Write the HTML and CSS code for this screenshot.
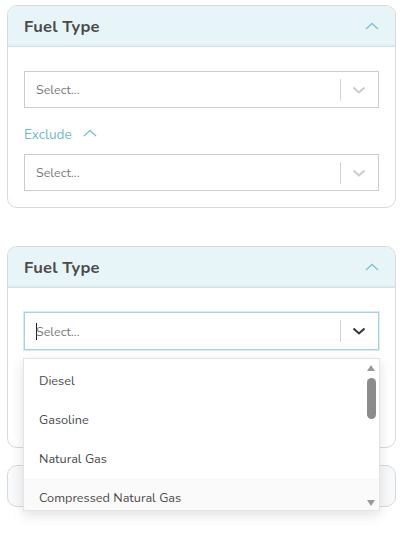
FILE: index.html
```html
<!DOCTYPE html>
<html>
<head>
<meta charset="utf-8">
<link rel="stylesheet" href="styles.css">
</head>
<body>
<div class="page">
  <div class="card card-first">
    <div class="card-header">
      <span class="title">Fuel Type</span>
      <svg class="hchev" width="14" height="8" viewBox="0 0 14 8"><path d="M1 7 L7 1.5 L13 7" fill="none" stroke="#7fc4cf" stroke-width="1.5"/></svg>
    </div>
    <div class="card-body">
      <div class="select">
        <span class="placeholder">Select...</span>
        <span class="sep"></span>
        <svg class="schev" width="14" height="8" viewBox="0 0 14 8"><path d="M1.5 1.5 L7 6.5 L12.5 1.5" fill="none" stroke="#cccccc" stroke-width="2"/></svg>
      </div>
      <div class="exclude">
        <span>Exclude</span>
        <svg class="echev" width="14" height="8" viewBox="0 0 14 8"><path d="M1 7 L7 1.5 L13 7" fill="none" stroke="#7fc4cf" stroke-width="1.5"/></svg>
      </div>
      <div class="select">
        <span class="placeholder">Select...</span>
        <span class="sep"></span>
        <svg class="schev" width="14" height="8" viewBox="0 0 14 8"><path d="M1.5 1.5 L7 6.5 L12.5 1.5" fill="none" stroke="#cccccc" stroke-width="2"/></svg>
      </div>
    </div>
  </div>

  <div class="card card-second">
    <div class="card-header">
      <span class="title">Fuel Type</span>
      <svg class="hchev" width="14" height="8" viewBox="0 0 14 8"><path d="M1 7 L7 1.5 L13 7" fill="none" stroke="#7fc4cf" stroke-width="1.5"/></svg>
    </div>
    <div class="card-body">
      <div class="select focused">
        <span class="caret"></span>
        <span class="placeholder">Select...</span>
        <span class="sep"></span>
        <svg class="schev" width="14" height="8" viewBox="0 0 14 8"><path d="M1.5 1.5 L7 6.5 L12.5 1.5" fill="none" stroke="#333333" stroke-width="2"/></svg>
      </div>
      <div class="spacer"></div>
    </div>
  </div>

  <div class="card card-collapsed"></div>

  <div class="menu">
    <div class="option">Diesel</div>
    <div class="option">Gasoline</div>
    <div class="option">Natural Gas</div>
    <div class="option hover">Compressed Natural Gas</div>
    <div class="scrollbar">
      <span class="arrow-up"></span>
      <span class="thumb"></span>
      <span class="arrow-down"></span>
    </div>
  </div>
</div>
</body>
</html>
```

FILE: styles.css
```css
* { box-sizing: border-box; }
html, body { margin: 0; padding: 0; background: #ffffff; }
body {
  font-family: "Nunito", "Lato", "Open Sans", sans-serif;
  width: 403px;
  height: 545px;
  overflow: hidden;
}
.page {
  position: relative;
  padding: 5px 7px 0 7px;
}
.card {
  border: 1px solid #d9d9d9;
  border-radius: 10px;
  overflow: hidden;
  background: #ffffff;
}
.card-first { margin-bottom: 38px; }
.card-second { margin-bottom: 17px; }
.card-header {
  height: 41px;
  background: #e8f5f8;
  border-bottom: 1px solid #cfe2e6;
  box-shadow: inset 0 -2px 0 #e2eef0;
  display: flex;
  align-items: center;
  justify-content: space-between;
  padding: 0 16px 0 16px;
}
.title {
  font-weight: 700;
  font-size: 16.5px;
  color: #4a4a4a;
  letter-spacing: 0.2px;
}
.hchev { margin-top: 0; }
.card-body {
  padding: 24px 16px 16px 16px;
}
.select {
  height: 37px;
  border: 1px solid #cccccc;
  display: flex;
  align-items: center;
  padding: 0 12px 0 11px;
}
.select.focused {
  height: 38px;
  border: 1px solid #a8d3dc;
  box-shadow: 0 0 0 1px #d6ecf0;
}
.placeholder {
  flex: 1;
  font-size: 12.5px;
  color: #7a7a7a;
}
.caret {
  width: 1px;
  height: 17px;
  background: #222;
  margin-right: -1px;
}
.sep {
  width: 1px;
  height: 22px;
  background: #d4d4d4;
  margin-right: 11px;
}
.schev { display: block; }
.exclude {
  display: flex;
  align-items: center;
  gap: 11px;
  height: 20px;
  margin: 16px 0 10px 0;
  color: #6fbac8;
  font-size: 13.5px;
}
.echev { margin-top: -2px; }
.spacer { height: 81px; }
.card-collapsed {
  height: 42px;
  background: #f7f9fa;
}
.menu {
  position: absolute;
  left: 23px;
  top: 358px;
  width: 357px;
  height: 153px;
  background: #ffffff;
  border: 1px solid #e4e4e4;
  box-shadow: 0 4px 12px rgba(0,0,0,0.12);
  overflow: hidden;
  padding-top: 2px;
}
.option {
  height: 39px;
  display: flex;
  align-items: center;
  padding-left: 15px;
  font-size: 12.7px;
  color: #4a4a4a;
}
.option.hover { background: #fafafa; }
.scrollbar {
  position: absolute;
  right: 2px;
  top: 0;
  width: 12px;
  height: 151px;
}
.arrow-up {
  position: absolute;
  left: 2px;
  top: 6px;
  width: 0; height: 0;
  border-left: 4.5px solid transparent;
  border-right: 4.5px solid transparent;
  border-bottom: 6px solid #999999;
}
.arrow-down {
  position: absolute;
  left: 2px;
  bottom: 4px;
  width: 0; height: 0;
  border-left: 4.5px solid transparent;
  border-right: 4.5px solid transparent;
  border-top: 6px solid #999999;
}
.thumb {
  position: absolute;
  left: 1.5px;
  top: 19px;
  width: 9px;
  height: 41px;
  border-radius: 5px;
  background: #8c8c8c;
}
```
